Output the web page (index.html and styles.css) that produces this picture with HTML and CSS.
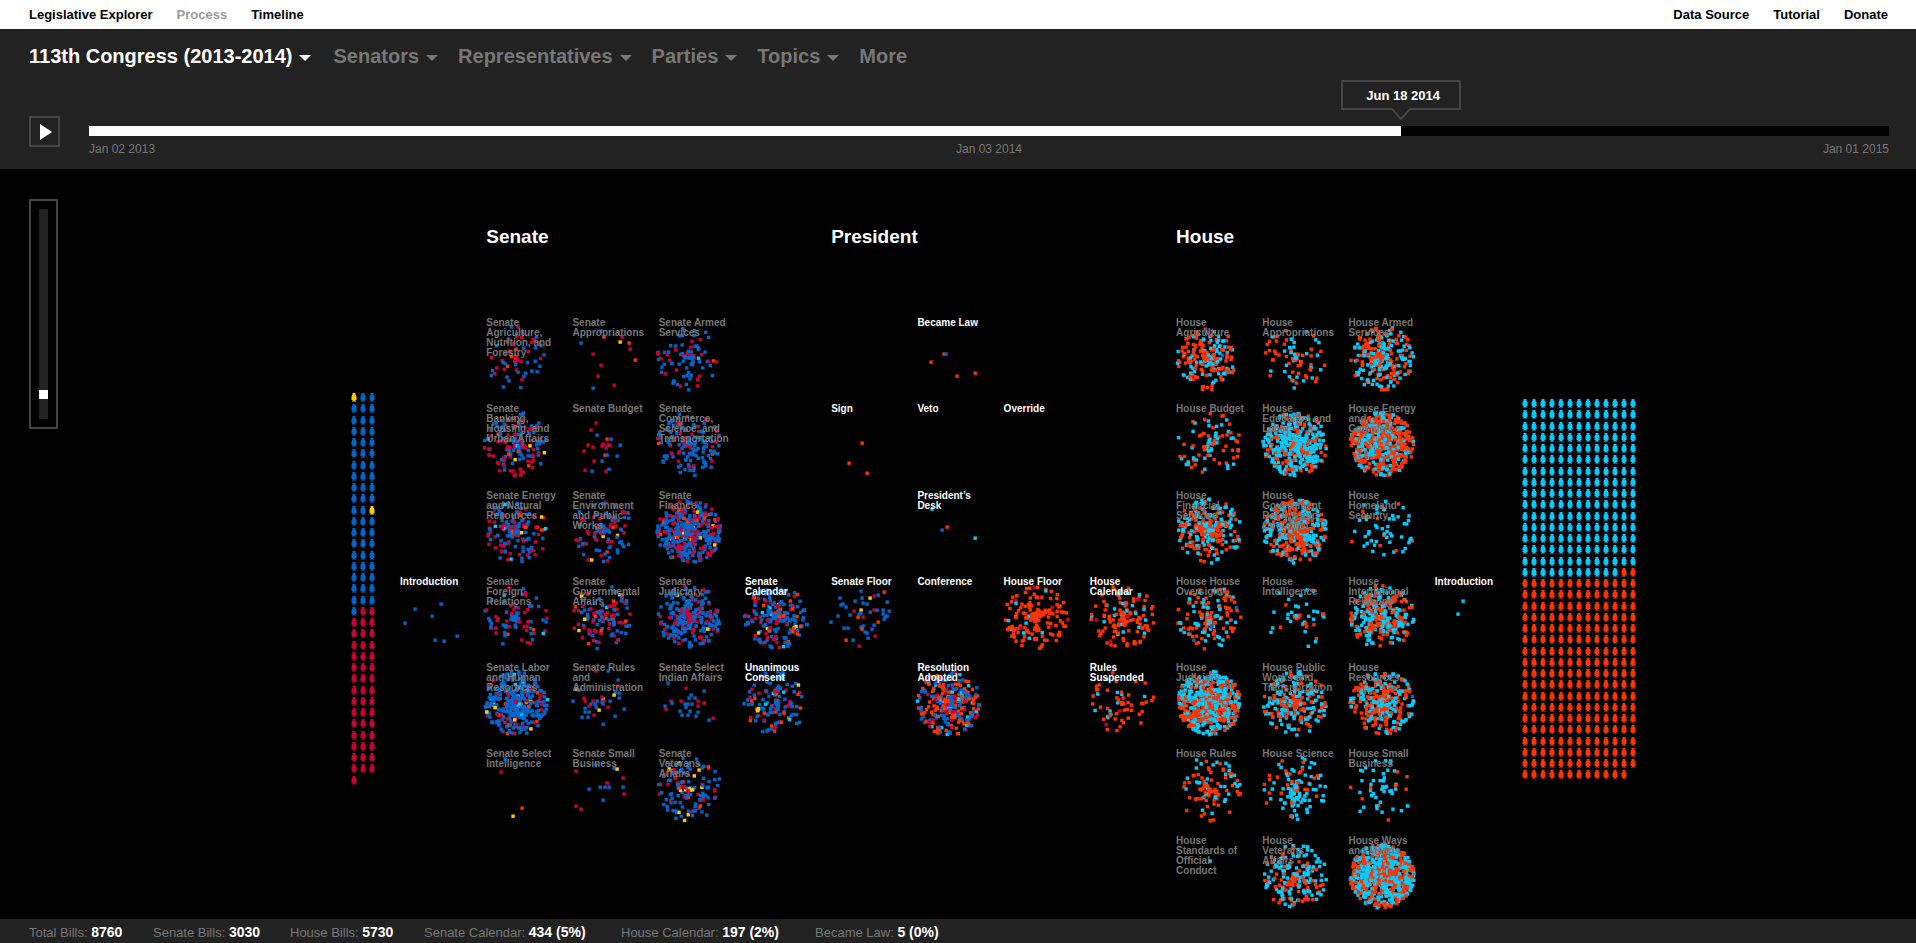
FILE: index.html
```html
<!DOCTYPE html>
<html lang="en">
<head>
<meta charset="utf-8">
<title>Legislative Explorer</title>
<link rel="stylesheet" href="styles.css">
</head>
<body>
<nav class="topbar">
  <div class="topbar-group">
    <a href="#">Legislative Explorer</a>
    <a href="#" class="current">Process</a>
    <a href="#">Timeline</a>
  </div>
  <div class="topbar-group">
    <a href="#">Data Source</a>
    <a href="#">Tutorial</a>
    <a href="#">Donate</a>
  </div>
</nav>

<header class="header">
  <div class="filters">
    <button class="filter active">113th Congress (2013-2014)<span class="caret"></span></button>
    <button class="filter">Senators<span class="caret"></span></button>
    <button class="filter">Representatives<span class="caret"></span></button>
    <button class="filter">Parties<span class="caret"></span></button>
    <button class="filter">Topics<span class="caret"></span></button>
    <button class="filter">More</button>
  </div>
  <div class="player">
    <button class="play" aria-label="Play">
      <svg viewBox="0 0 12 16" width="12" height="16"><path d="M0 0L12 8L0 16Z" fill="#fff"/></svg>
    </button>
    <div class="timeline">
      <input class="track" type="range" min="0" max="1000" value="729" aria-label="Date">
      <div class="dates"><span>Jan 02 2013</span><span>Jan 03 2014</span><span>Jan 01 2015</span></div>
      <output class="tip">Jun 18 2014
        <svg class="tip-arrow" viewBox="0 0 20 12" width="20" height="12"><path d="M1 0L10 10L19 0Z" fill="#222"/><path d="M0 1H1L10 11L19 1H20" fill="none" stroke="#444" stroke-width="2"/></svg>
      </output>
    </div>
  </div>
</header>

<main class="stage">
  <div class="zoom-box"><input class="zoom" type="range" min="0" max="100" value="10" aria-label="Zoom"></div>
  <svg class="people senators" id="senators" width="27" height="394"></svg>
  <section class="board" id="board">
    <h2 class="chamber senate">Senate</h2>
    <h2 class="chamber president">President</h2>
    <h2 class="chamber house">House</h2>
  </section>
  <svg class="people representatives" id="representatives" width="117" height="382"></svg>
</main>

<footer class="stats">
  <span>Total Bills: <b>8760</b></span>
  <span>Senate Bills: <b>3030</b></span>
  <span>House Bills: <b>5730</b></span>
  <span>Senate Calendar: <b>434 (5%)</b></span>
  <span>House Calendar: <b>197 (2%)</b></span>
  <span>Became Law: <b>5 (0%)</b></span>
</footer>
<script src="app.js"></script>
</body>
</html>
```

FILE: styles.css
```css
* { box-sizing: border-box; }

body {
  margin: 0;
  min-height: 100vh;
  display: flex;
  flex-direction: column;
  background: #000;
  color: #777;
  font-family: "Liberation Sans", Arial, Helvetica, sans-serif;
  overflow: hidden;
}

button {
  font: inherit;
  color: inherit;
  background: none;
  border: 0;
  padding: 0;
  cursor: pointer;
}

/* top bar */
.topbar {
  display: flex;
  justify-content: space-between;
  padding: 0 28px 0 29px;
  background: #fff;
  font-size: 13px;
  font-weight: bold;
  line-height: 29px;
}
.topbar-group { display: flex; gap: 24px; }
.topbar a { color: #000; text-decoration: none; }
.topbar a.current { color: #999; }

/* header */
.header {
  background: #222;
  height: 140px;
  padding: 15px 27px 0 29px;
}
.filters {
  display: flex;
  gap: 20px;
  font-size: 20px;
  font-weight: bold;
  line-height: 24px;
}
.filter { display: flex; align-items: center; gap: 7px; }
.filter.active { color: #fff; padding-right: 2px; }
.caret {
  border: 6px solid transparent;
  border-top-color: currentColor;
  border-bottom: 0;
  margin-top: 4px;
}
.player {
  display: flex;
  gap: 29px;
  padding-top: 48px;
}
.play {
  width: 31px;
  height: 31px;
  border: 2px solid #444;
  display: flex;
  align-items: center;
  justify-content: center;
  padding-left: 3px;
}
.timeline { flex: 1; position: relative; padding-top: 10px; }
.track {
  appearance: none;
  display: block;
  width: 100%;
  height: 10px;
  margin: 0;
  background: linear-gradient(to right, #fff 72.9%, #000 72.9%);
}
.track::-webkit-slider-thumb { appearance: none; width: 1px; height: 10px; }
.dates {
  display: flex;
  justify-content: space-between;
  padding-top: 6px;
  font-size: 12px;
  line-height: 14px;
}
.tip {
  position: absolute;
  left: 72.9%;
  bottom: 100%;
  width: 120px;
  height: 30px;
  margin: 0 0 6px -60px;
  border: 2px solid #444;
  color: #fff;
  font-size: 13px;
  font-weight: bold;
  line-height: 27px;
  text-align: center;
  padding-left: 4px;
}
.tip-arrow { position: absolute; left: 48px; top: 26px; }

/* stage */
.stage {
  flex: 1;
  position: relative;
  display: grid;
  grid-template-columns: 349fr 51px 1121fr 117px 278fr;
  align-items: start;
  padding-top: 62px;
}
.zoom-box {
  position: absolute;
  left: 29px;
  top: 30px;
  width: 29px;
  height: 230px;
  border: 2px solid #444;
  padding: 8px;
}
.zoom {
  appearance: none;
  display: block;
  writing-mode: vertical-lr;
  direction: rtl;
  width: 9px;
  height: 210px;
  margin: 0;
  background: #222;
}
.zoom::-webkit-slider-thumb { appearance: none; width: 9px; height: 9px; background: #fff; }

.senators { grid-column: 2; margin-top: 162px; }
.representatives { grid-column: 4; margin-top: 168px; }

.board {
  grid-column: 3;
  display: grid;
  grid-template-columns: repeat(13, 1fr);
  grid-template-rows: repeat(8, 1fr);
  aspect-ratio: 13 / 8;
  margin-bottom: -8px;
}
.chamber {
  grid-row: 1;
  margin: 0;
  color: #fff;
  font-size: 19px;
  line-height: 12px;
}
.chamber.senate { grid-column: 2 / span 3; }
.chamber.president { grid-column: 6 / span 3; }
.chamber.house { grid-column: 10 / span 3; }

.cell { display: grid; min-width: 0; min-height: 0; }
.cell > * { grid-area: 1 / 1; }
.dots { width: 100%; overflow: visible; }
.label {
  position: relative;
  margin: 0;
  width: 72px;
  padding-top: 1px;
  font-size: 10px;
  font-weight: bold;
  line-height: 10px;
}
.label.key { color: #fff; }

/* footer */
.stats {
  position: relative;
  display: grid;
  grid-template-columns: 124px 137px 134px 197px 194px 1fr;
  padding: 3px 29px 0;
  background: #222;
  font-size: 13px;
  line-height: 21px;
}
.stats b { color: #fff; font-size: 14px; line-height: 18px; }
```

FILE: app.js
```js
const COLORS = { b: '#06c', r: '#c03', y: '#fc0', o: '#f30', c: '#0cf' };
const NS = 'http://www.w3.org/2000/svg';

/* Each stage: column, row, label, emphasised, bills.
   Bills are either a list of "x,y,colour" points or [count, colour shares, centre x]. */
const STAGES = [
  [0, 4, 'Introduction', 1, '41,28,b 15,33,b 32,40,b 5,47,b 57,60,b 35,64,b 44,65,b'],
  [1, 1, 'Senate Agriculture, Nutrition, and Forestry', 0, [62, { b: 58, r: 36, o: 6 }, 30]],
  [2, 1, 'Senate Appropriations', 0, '29,14,b 32,20,o 50,20,r 9,26,b 48,25,y 57,26,o 58,32,r 21,37,r 63,43,o 29,48,r 26,59,r 42,68,r 21,71,b'],
  [3, 1, 'Senate Armed Services', 0, [85, { b: 70, r: 27, o: 2, c: 1 }, 30]],
  [1, 2, 'Senate Banking, Housing, and Urban Affairs', 0, [150, { b: 50, r: 36, o: 7, y: 4, c: 3 }, 30]],
  [2, 2, 'Senate Budget', 0, '24,20,r 19,27,r 25,32,b 35,36,o 39,36,b 31,41,r 16,42,r 21,44,r 36,42,r 38,42,r 48,42,b 30,43,r 12,48,r 33,52,o 35,52,b 45,53,b 22,58,r 30,58,b 13,67,r 20,68,b 34,68,r 37,66,b 34,45,r'],
  [3, 2, 'Senate Commerce, Science, and Transportation', 0, [150, { b: 68, r: 29, o: 2, c: 1 }, 30]],
  [1, 3, 'Senate Energy and Natural Resources', 0, [150, { b: 55, r: 34, o: 6, y: 2, c: 3 }, 30]],
  [2, 3, 'Senate Environment and Public Works', 0, [105, { b: 60, r: 34, o: 4, y: 2 }, 30]],
  [3, 3, 'Senate Finance', 0, [420, { b: 58, r: 36, o: 3, y: 3 }, 30]],
  [1, 4, 'Senate Foreign Relations', 0, [80, { b: 52, r: 39, o: 8, c: 1 }, 30]],
  [2, 4, 'Senate Governmental Affairs', 0, [120, { b: 42, r: 46, o: 7, y: 3, c: 2 }, 30]],
  [3, 4, 'Senate Judiciary', 0, [270, { b: 75, r: 23, y: 1, c: 1 }, 30]],
  [4, 4, 'Senate Calendar', 1, [210, { b: 60, r: 21, o: 11, y: 3, c: 5 }, 31]],
  [1, 5, 'Senate Labor and Human Resources', 0, [360, { b: 77, r: 15, o: 3, y: 3, c: 2 }, 30]],
  [2, 5, 'Senate Rules and Administration', 0, '24,9,r 36,9,b 46,18,b 4,27,y 7,28,b 46,24,r 43,30,b 42,33,y 47,31,b 47,36,b 12,36,r 13,39,r 1,39,b 31,37,y 30,35,r 30,40,b 32,39,r 25,39,b 21,39,r 19,42,b 23,42,b 31,42,b 17,44,r 13,46,b 24,45,b 27,48,y 36,45,r 38,39,b 52,47,b 17,50,b 13,50,b 22,53,r 10,55,b 16,55,b 43,54,b 31,62,b'],
  [3, 5, 'Senate Select Indian Affairs', 0, '9,21,b 27,26,r 45,29,b 12,39,r 13,41,b 22,39,r 30,36,b 32,33,b 36,36,b 39,39,r 45,41,r 26,42,b 29,42,b 27,45,b 33,42,b 6,44,b 7,47,r 39,44,r 21,49,b 23,53,b 29,53,b 31,49,b 37,54,b 39,50,b 50,58,b 54,56,r'],
  [4, 5, 'Unanimous Consent', 1, [125, { b: 60, r: 14, o: 21, y: 2, c: 3 }, 31]],
  [1, 6, 'Senate Select Intelligence', 0, '19,11,b 15,24,r 36,60,o 27,68,y'],
  [2, 6, 'Senate Small Business', 0, '24,17,b 4,23,r 42,20,b 45,21,y 51,30,r 35,35,r 17,41,b 28,39,b 33,39,b 37,39,b 51,39,b 52,46,r 31,52,b 4,58,r 9,61,r'],
  [3, 6, 'Senate Veterans Affairs', 0, [130, { b: 62, r: 21, o: 4, y: 11, c: 2 }, 30]],
  [6, 1, 'Became Law', 1, '27,37,o 29,37,b 14,45,o 40,59,o 58,56,o'],
  [5, 2, 'Sign', 1, '31,40,o 18,60,o 36,70,o'],
  [6, 2, 'Veto', 1, ''],
  [7, 2, 'Override', 1, ''],
  [6, 3, 'President’s Desk', 1, '15,19,c 30,37,o 25,40,b 58,48,c'],
  [5, 4, 'Senate Floor', 1, '30,15,b 53,16,o 9,22,b 31,22,b 39,22,y 43,20,r 47,19,b 24,25,b 32,27,b 36,28,b 12,28,b 10,29,b 15,31,b 56,26,b 30,34,y 23,35,r 39,36,b 43,34,r 46,34,b 52,34,b 58,35,b 7,40,b 19,39,b 28,38,b 30,37,b 27,41,o 32,41,r 52,38,b 54,41,b 56,40,b 53,43,b 0,46,b 47,46,o 43,49,b 13,52,b 17,52,b 30,51,b 32,50,b 31,53,o 41,53,b 34,56,b 36,57,b 44,60,r 37,62,b 15,64,o 22,64,b 28,70,r'],
  [6, 4, 'Conference', 1, ''],
  [7, 4, 'House Floor', 1, [160, { o: 85, c: 12, b: 1, r: 2 }, 32]],
  [8, 4, 'House Calendar', 1, [135, { o: 78, c: 20, r: 2 }, 33]],
  [6, 5, 'Resolution Adopted', 1, [310, { b: 34, o: 40, r: 18, c: 7, y: 1 }, 32]],
  [8, 5, 'Rules Suspended', 1, [60, { o: 77, c: 20, r: 3 }, 33]],
  [9, 1, 'House Agriculture', 0, [200, { o: 60, c: 38, b: 2 }, 33]],
  [10, 1, 'House Appropriations', 0, [78, { o: 64, c: 36 }, 33]],
  [11, 1, 'House Armed Services', 0, [250, { o: 48, c: 52 }, 33]],
  [9, 2, 'House Budget', 0, [90, { o: 52, c: 48 }, 33]],
  [10, 2, 'House Education and Labor', 0, [430, { o: 25, c: 75 }, 33]],
  [11, 2, 'House Energy and Commerce', 0, [620, { o: 58, c: 42 }, 33]],
  [9, 3, 'House Financial Services', 0, [270, { o: 48, c: 52 }, 33]],
  [10, 3, 'House Government Reform and Oversight', 0, [400, { o: 55, c: 45 }, 33]],
  [11, 3, 'House Homeland Security', 0, [60, { o: 30, c: 70 }, 33]],
  [9, 4, 'House House Oversight', 0, [150, { o: 58, c: 41, b: 1 }, 33]],
  [10, 4, 'House Intelligence', 0, [45, { o: 25, c: 75 }, 33]],
  [11, 4, 'House International Relations', 0, [320, { o: 52, c: 48 }, 33]],
  [9, 5, 'House Judiciary', 0, [620, { o: 48, c: 52 }, 33]],
  [10, 5, 'House Public Works and Transportation', 0, [230, { o: 43, c: 56, b: 1 }, 33]],
  [11, 5, 'House Resources', 0, [310, { o: 53, c: 46, b: 1 }, 33]],
  [9, 6, 'House Rules', 0, [100, { o: 66, c: 34 }, 33]],
  [10, 6, 'House Science', 0, [115, { o: 27, c: 73 }, 33]],
  [11, 6, 'House Small Business', 0, [52, { o: 22, c: 78 }, 33]],
  [9, 7, 'House Standards of Official Conduct', 0, '34,26,c'],
  [10, 7, 'House Veterans Affairs', 0, [200, { o: 38, c: 62 }, 33]],
  [11, 7, 'House Ways and Means', 0, [850, { o: 46, c: 54 }, 33]],
  [12, 4, 'Introduction', 1, '28,25,c 23,38,c'],
];

let seed = 113;
function rand() {
  seed = (seed * 48271) % 2147483647;
  return seed / 2147483647;
}

function pick(shares) {
  let n = rand() * 100;
  for (const key in shares) {
    n -= shares[key];
    if (n < 0) return key;
  }
  return Object.keys(shares)[0];
}

function cluster([count, shares, cx]) {
  const points = [];
  for (let i = 0; i < count; i++) {
    const angle = rand() * Math.PI * 2;
    const radius = 32 * Math.pow(rand(), rand() < 0.5 ? 1.2 : 0.55);
    points.push([cx + radius * Math.cos(angle), 41 + radius * Math.sin(angle), pick(shares)]);
  }
  return points;
}

function node(name, attrs, parent) {
  const el = document.createElementNS(NS, name);
  for (const key in attrs) el.setAttribute(key, attrs[key]);
  parent.appendChild(el);
  return el;
}

const board = document.getElementById('board');
for (const [col, row, name, key, bills] of STAGES) {
  const cell = document.createElement('div');
  cell.className = 'cell';
  cell.style.gridArea = `${row + 1} / ${col + 1}`;
  const svg = node('svg', { class: 'dots', viewBox: '0 0 86 86' }, cell);
  const points = typeof bills === 'string'
    ? bills.split(' ').filter(Boolean).map(p => p.split(','))
    : cluster(bills);
  for (const [x, y, color] of points) {
    node('rect', { x: (x - 1.7).toFixed(1), y: (y - 1.7).toFixed(1), width: 3.4, height: 3.4, fill: COLORS[color] }, svg);
  }
  const label = document.createElement('p');
  label.className = key ? 'label key' : 'label';
  label.textContent = name;
  cell.appendChild(label);
  board.appendChild(cell);
}

function people(id, columns, total, left, colorOf) {
  const svg = document.getElementById(id);
  for (let i = 0; i < total; i++) {
    const x = (i % columns) * 9 + left;
    const y = Math.round(Math.floor(i / columns) * 11.25);
    const g = node('g', { transform: `translate(${x} ${y})`, fill: COLORS[colorOf(i)] }, svg);
    node('path', { d: 'M2 0H4V2H5V7H4V8H2V7H1V2H2Z' }, g);
    node('path', { d: 'M1 0H2V2H1ZM4 0H5V2H4ZM0 3H1V7H0ZM5 3H6V7H5ZM1 7H2V9H1ZM4 7H5V9H4ZM2 8H4V9H2Z', opacity: 0.5 }, g);
  }
}
people('senators', 3, 103, 2, i => (i === 0 || i === 32 ? 'y' : i < 58 ? 'b' : 'r'));
people('representatives', 13, 441, 1, i => (i < 206 ? 'c' : 'o'));
```
